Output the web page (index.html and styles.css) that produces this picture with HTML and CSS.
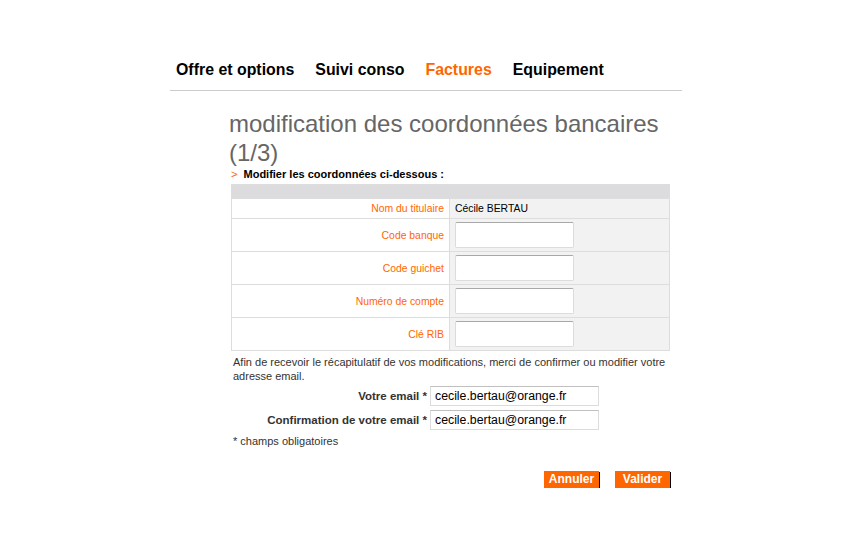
FILE: index.html
```html
<!DOCTYPE html>
<html lang="fr">
<head>
<meta charset="utf-8">
<title>modification des coordonnées bancaires</title>
<link rel="stylesheet" href="styles.css">
</head>
<body>
<div class="page">
  <nav class="nav">
    <a class="nav-item">Offre et options</a>
    <a class="nav-item">Suivi conso</a>
    <a class="nav-item active">Factures</a>
    <a class="nav-item">Equipement</a>
  </nav>
  <main class="content">
    <h1 class="title">modification des coordonnées bancaires (1/3)</h1>
    <p class="intro"><span class="chev">&gt;</span> Modifier les coordonnées ci-dessous :</p>
    <table class="rib">
      <tr class="head"><td colspan="2"></td></tr>
      <tr class="row-short"><th>Nom du titulaire</th><td>Cécile BERTAU</td></tr>
      <tr><th>Code banque</th><td><input class="field" type="text"></td></tr>
      <tr><th>Code guichet</th><td><input class="field" type="text"></td></tr>
      <tr><th>Numéro de compte</th><td><input class="field" type="text"></td></tr>
      <tr><th>Clé RIB</th><td><input class="field" type="text"></td></tr>
    </table>
    <p class="note">Afin de recevoir le récapitulatif de vos modifications, merci de confirmer ou modifier votre adresse email.</p>
    <div class="email-grid">
      <label class="email-label">Votre email *</label>
      <input class="email-field" type="text" value="cecile.bertau@orange.fr">
      <label class="email-label">Confirmation de votre email *</label>
      <input class="email-field" type="text" value="cecile.bertau@orange.fr">
    </div>
    <p class="required">* champs obligatoires</p>
    <div class="actions">
      <button class="btn">Annuler</button>
      <button class="btn">Valider</button>
    </div>
  </main>
</div>
</body>
</html>
```
FILE: styles.css
```css
html, body {
  margin: 0;
  padding: 0;
  background: #fff;
  font-family: "Liberation Sans", Arial, sans-serif;
}

.page {
  width: 512px;
  margin: 0 auto;
}

.nav {
  display: flex;
  gap: 21px;
  padding: 60px 0 0 6px;
  height: 30px;
  border-bottom: 1px solid #cccccc;
  box-sizing: content-box;
}

.nav-item {
  font-size: 15.9px;
  font-weight: bold;
  line-height: 20px;
  color: #000;
}

.nav-item.active {
  color: #ff6600;
}

.content {
  padding: 0 12px 0 59px;
}

.title {
  margin: 18px 0 0 0;
  font-size: 24px;
  line-height: 29px;
  font-weight: normal;
  color: #666666;
}

.intro {
  margin: 0;
  padding-left: 2px;
  font-size: 11px;
  font-weight: bold;
  line-height: 14px;
  color: #000;
}

.chev {
  color: #ff6600;
  font-weight: normal;
  margin-right: 3px;
}

.rib {
  margin: 3px 0 0 2px;
  width: 439px;
  border-collapse: collapse;
  border: 1px solid #dddddd;
  font-size: 10.4px;
}

.rib .head td {
  background: #dcdbdd;
  height: 13px;
  padding: 0;
}

.rib th {
  width: 212px;
  text-align: right;
  font-weight: normal;
  color: #ff6600;
  padding: 0 5px 0 0;
  height: 32px;
  border-top: 1px solid #dddddd;
  border-right: 1px solid #dddddd;
  background: #fff;
}

.rib td {
  background: #f2f2f2;
  padding: 0 0 0 5px;
  border-top: 1px solid #dddddd;
  color: #000;
}

.rib .row-short th {
  height: 19px;
}

.field {
  display: block;
  width: 119px;
  height: 26px;
  box-sizing: border-box;
  border: 1px solid #dcdcdc;
  border-top-color: #a8a8a8;
  border-radius: 2px;
  background: #fff;
  margin: 0;
  padding: 0 3px;
}

.note {
  margin: 4px 0 0 4px;
  font-size: 11px;
  line-height: 14px;
  color: #333;
}

.email-grid {
  display: grid;
  grid-template-columns: 198px 169px;
  column-gap: 3px;
  row-gap: 4px;
  margin-top: 3px;
  align-items: center;
}

.email-label {
  text-align: right;
  font-size: 11.5px;
  font-weight: bold;
  color: #333;
}

.email-field {
  height: 20px;
  box-sizing: border-box;
  border: 1px solid #dcdcdc;
  border-top-color: #c0c0c0;
  margin: 0;
  padding: 0 4px;
  font-family: "Liberation Sans", Arial, sans-serif;
  font-size: 12.3px;
  color: #000;
}

.required {
  margin: 4px 0 0 4px;
  font-size: 11px;
  line-height: 14px;
  color: #333;
}

.actions {
  display: flex;
  justify-content: flex-end;
  gap: 16px;
  margin-top: 23px;
}

.btn {
  background: #ff6600;
  color: #fff;
  border: 0;
  padding: 0;
  height: 17px;
  width: 55px;
  font-family: "Liberation Sans", Arial, sans-serif;
  font-size: 12px;
  font-weight: bold;
  box-shadow: 1px 1px 0 #000;
  line-height: 17px;
}
```
